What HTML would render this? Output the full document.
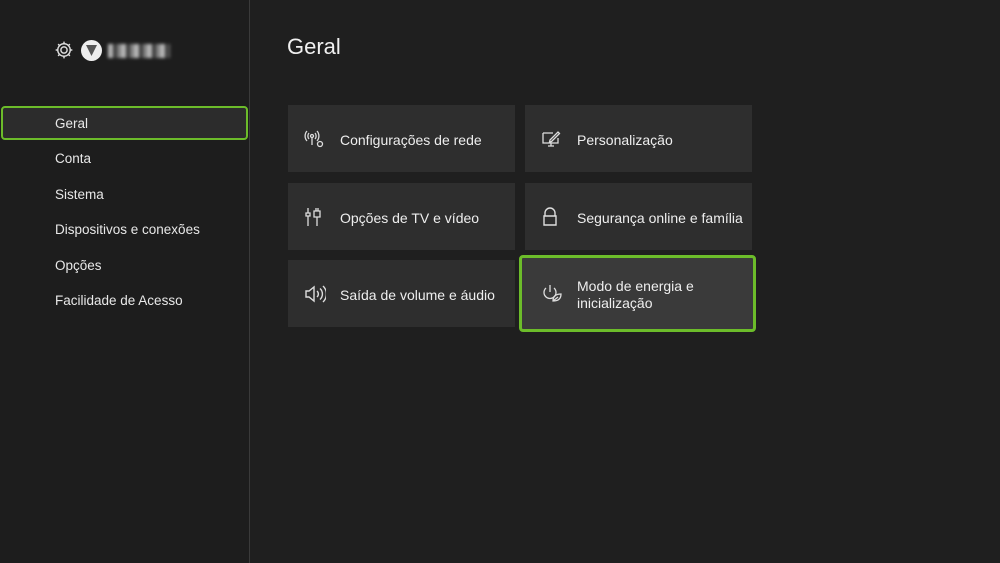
<!DOCTYPE html><html><head><style>
body{margin:0;width:1000px;height:563px;background:#1f1f1f;font-family:"Liberation Sans",sans-serif;color:#eee;position:relative;overflow:hidden}
.side{position:absolute;left:0;top:0;width:249px;height:563px;background:#1d1d1d;border-right:1px solid #3a3a3a}
.nav{position:absolute;left:55px;font-size:13.5px;color:#e8e8e8}
.sel{position:absolute;left:1px;top:106px;width:243px;height:30px;border:2px solid #6cbc2a;border-radius:4px;background:#2c2c2c}
h1{position:absolute;left:287px;top:34px;margin:0;font-weight:normal;font-size:22px;color:#f0f0f0}
.t{position:absolute;width:227px;height:67px;background:#2e2e2e;font-size:14px;display:flex;align-items:center}
.t svg{position:absolute;left:16px;top:50%;transform:translateY(-50%)}
.t span{margin-left:52px;line-height:17px;padding-top:3px}
.f{background:#3a3a3a;border:3px solid #6cbc2a;border-radius:4px;width:231px;height:71px}
</style></head><body>
<div class="side">
<svg style="position:absolute;left:54px;top:40px" width="20" height="20" viewBox="0 0 18 18" fill="none" stroke="#ddd" stroke-width="1.3"><circle cx="9" cy="9" r="2.8"/><path d="M9 1.5v2.2M9 14.3v2.2M1.5 9h2.2M14.3 9h2.2M3.7 3.7l1.6 1.6M12.7 12.7l1.6 1.6M3.7 14.3l1.6-1.6M12.7 5.3l1.6-1.6"/><circle cx="9" cy="9" r="5.6"/></svg>
<div style="position:absolute;left:81px;top:40px;width:21px;height:21px;border-radius:50%;background:#eee"><div style="position:absolute;left:5px;top:5px;width:11px;height:11px;background:#555;clip-path:polygon(0 0,100% 0,50% 100%)"></div></div>
<div style="position:absolute;left:108px;top:44px;width:62px;height:14px;background:repeating-linear-gradient(90deg,#ddd 0 5px,#444 5px 9px,#999 9px 13px);filter:blur(1.5px);opacity:.8"></div>
<div class="sel"></div>
<div class="nav" style="top:116px">Geral</div>
<div class="nav" style="top:151px">Conta</div>
<div class="nav" style="top:187px">Sistema</div>
<div class="nav" style="top:222px">Dispositivos e conexões</div>
<div class="nav" style="top:258px">Opções</div>
<div class="nav" style="top:293px">Facilidade de Acesso</div>
</div>
<h1>Geral</h1>
<div class="t" style="left:288px;top:105px"><svg width="22" height="20" viewBox="0 0 22 20" fill="none" stroke="#ddd" stroke-width="1.3"><circle cx="8" cy="7" r="1.5"/><path d="M5 4a4.5 4.5 0 0 0 0 6M11 4a4.5 4.5 0 0 1 0 6M3 2a7.5 7.5 0 0 0 0 10M13 2a7.5 7.5 0 0 1 0 10M8 9v7"/><circle cx="16" cy="15" r="2.5"/></svg><span>Configurações de rede</span></div>
<div class="t" style="left:525px;top:105px"><svg width="20" height="18" viewBox="0 0 20 18" fill="none" stroke="#ddd" stroke-width="1.3"><path d="M2 3h10M2 3v10h15v-5M7 16h6M10 13v3M9 10l8-8 1.5 1.5-8 8-2 .5z"/></svg><span>Personalização</span></div>
<div class="t" style="left:288px;top:183px"><svg width="18" height="20" viewBox="0 0 18 20" fill="none" stroke="#ddd" stroke-width="1.3"><path d="M4 1v5M2 6h4v3H2zM4 9v10M10 4h6v6h-6zM12 1v3M14 1v3M13 10v9"/></svg><span>Opções de TV e vídeo</span></div>
<div class="t" style="left:525px;top:183px"><svg width="18" height="20" viewBox="0 0 18 20" fill="none" stroke="#ddd" stroke-width="1.4"><path d="M4 9V6a5 5 0 0 1 10 0v3M3 9h12v9H3z"/></svg><span>Segurança online e família</span></div>
<div class="t" style="left:288px;top:260px"><svg width="22" height="18" viewBox="0 0 22 18" fill="none" stroke="#ddd" stroke-width="1.4"><path d="M2 6h3l5-4v14l-5-4H2zM13 6a4 4 0 0 1 0 6M16 3.5a7.5 7.5 0 0 1 0 11M19 1a11 11 0 0 1 0 16"/></svg><span>Saída de volume e áudio</span></div>
<div class="t f" style="left:519px;top:255px"><svg width="22" height="20" viewBox="0 0 22 20" fill="none" stroke="#ddd" stroke-width="1.3" style="left:19px"><path d="M5 4a6 6 0 1 0 8 0M9 1v7"/><path d="M12 17c0-5 3-7 8-7 0 5-3 7-8 7zM12 17l5-4"/></svg><span style="margin-left:55px">Modo de energia e<br>inicialização</span></div>
</body></html>
